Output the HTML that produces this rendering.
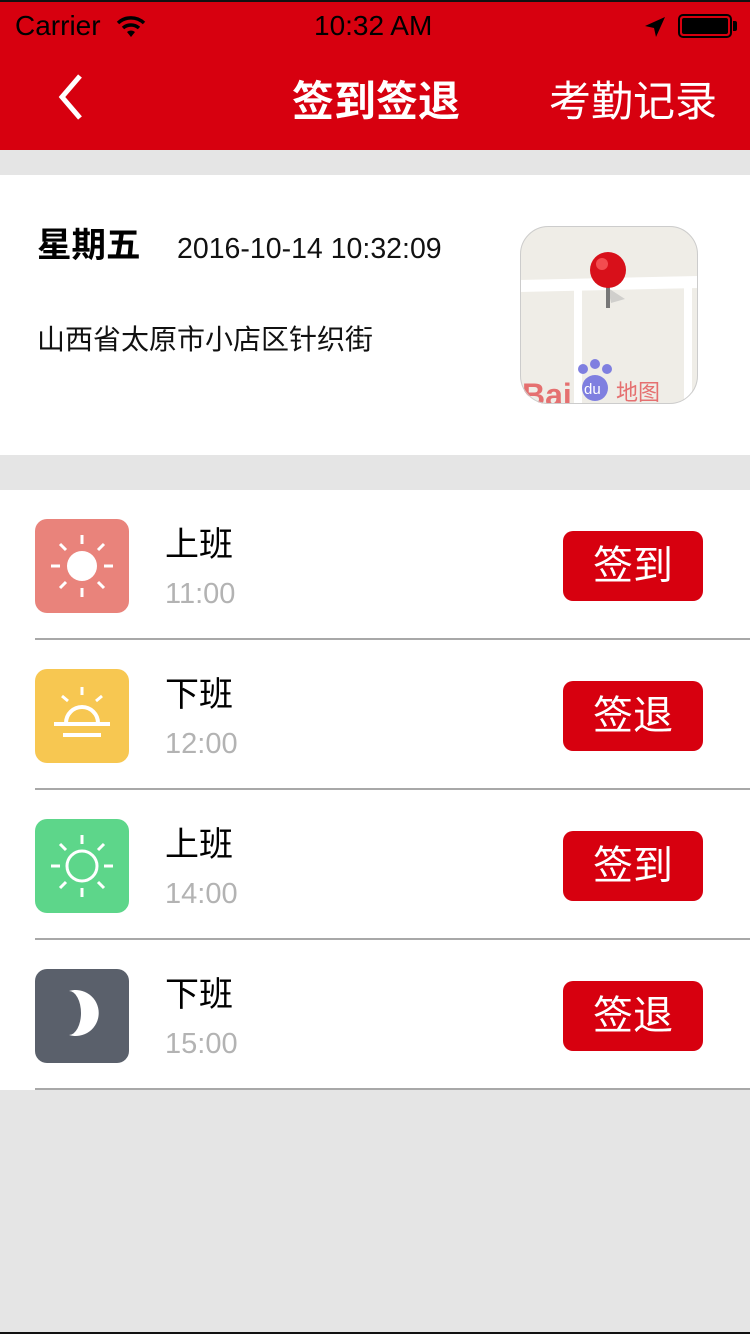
<!DOCTYPE html>
<html><head><meta charset="utf-8"><style>
*{margin:0;padding:0;box-sizing:border-box}
body{width:750px;height:1334px;background:#e5e5e5;position:relative;overflow:hidden;font-family:"Liberation Sans","Noto Sans CJK SC",sans-serif}
.a{position:absolute;white-space:nowrap}
.nav{position:absolute;left:0;top:0;width:750px;height:150px;background:#d7000f;border-top:2px solid #111}
.sep{position:absolute;left:35px;width:715px;height:2px;background:#a8a8a8}
.ic{position:absolute;left:35px;width:94px;height:94px;border-radius:12px}
.t1{position:absolute;left:165px;font-size:34px;color:#000;line-height:40px}
.t2{position:absolute;left:165px;font-size:29px;color:#b3b3b3;line-height:32px}
.btn{position:absolute;left:563px;width:140px;height:70px;border-radius:10px;background:#d7000f;color:#fff;font-size:40px;line-height:70px;text-align:center}
</style></head><body>
<div class="nav">
<div class="a" style="left:15px;top:8px;font-size:28px;color:#000">Carrier</div>
<svg class="a" style="left:116px;top:12px" width="30" height="24" viewBox="0 0 30 24"><path d="M2 9a19 19 0 0 1 26 0" stroke="#000" stroke-width="3.5" fill="none"/><path d="M7 14a12 12 0 0 1 16 0" stroke="#000" stroke-width="3.5" fill="none"/><path d="M15 23l-4-5a6 6 0 0 1 8 0z" fill="#000"/></svg>
<div class="a" style="left:314px;top:8px;font-size:28px;color:#000">10:32 AM</div>
<svg class="a" style="left:644px;top:14px" width="22" height="22" viewBox="0 0 22 22"><path d="M21 1L1 10l9 2 2 9z" fill="#000"/></svg>
<div class="a" style="left:678px;top:12px;width:54px;height:24px;border:2px solid #000;border-radius:5px;padding:2px"><div style="width:100%;height:100%;background:#000;border-radius:2px"></div></div>
<div class="a" style="left:733px;top:19px;width:4px;height:10px;background:#000;border-radius:0 2px 2px 0"></div>
<svg class="a" style="left:56px;top:72px" width="30" height="46" viewBox="0 0 30 46"><path d="M24 2L6 23l18 21" stroke="#fff" stroke-width="5" fill="none"/></svg>
<div class="a" style="left:292px;top:74px;font-size:42px;font-weight:bold;color:#fff;line-height:52px">签到签退</div>
<div class="a" style="left:549px;top:74px;font-size:42px;color:#fff;line-height:52px">考勤记录</div>
</div>
<div class="a" style="left:0;top:175px;width:750px;height:280px;background:#fff"></div>
<div class="a" style="left:37px;top:226px;font-size:34.5px;font-weight:bold;line-height:40px">星期五</div>
<div class="a" style="left:177px;top:232px;font-size:28.5px;line-height:34px;color:#111">2016-10-14 10:32:09</div>
<div class="a" style="left:37px;top:323px;font-size:28px;line-height:34px;color:#111">山西省太原市小店区针织街</div>
<svg class="a" style="left:520px;top:226px" width="178" height="178" viewBox="0 0 178 178">
<defs><clipPath id="c"><rect width="178" height="178" rx="28"/></clipPath></defs>
<g clip-path="url(#c)"><rect width="178" height="178" fill="#efede7"/>
<path d="M0 60 L178 56" stroke="#fff" stroke-width="12"/>
<path d="M58 62V178M168 58V178" stroke="#fff" stroke-width="8"/>
<path d="M88 62l3 15 14-4" fill="#bbb" opacity=".6"/>
<rect x="86" y="50" width="4" height="32" fill="#777"/>
<circle cx="88" cy="44" r="18" fill="#d8101a"/><circle cx="82" cy="38" r="6" fill="#f66" opacity=".7"/>
<text x="2" y="180" font-family="Liberation Sans" font-weight="bold" font-size="32" fill="#e57070">Bai</text>
<circle cx="75" cy="162" r="13" fill="#7f7fe0"/><circle cx="63" cy="143" r="5" fill="#7f7fe0"/><circle cx="75" cy="138" r="5" fill="#7f7fe0"/><circle cx="87" cy="143" r="5" fill="#7f7fe0"/>
<text x="64" y="168" font-family="Liberation Sans" font-size="15" fill="#fff">du</text>
<text x="96" y="174" font-family="Noto Sans CJK SC" font-size="22" fill="#e57070">地图</text></g>
<rect x=".5" y=".5" width="177" height="177" rx="28" fill="none" stroke="#ccc"/>
</svg>
<div class="a" style="left:0;top:490px;width:750px;height:600px;background:#fff"></div>

<div class="ic" style="top:519px;background:#e9837b"><svg width="94" height="94" viewBox="0 0 94 94"><circle cx="47" cy="47" r="15" fill="#fff"/><g stroke="#fff" stroke-width="3"><path d="M47 16v9M47 69v9M16 47h9M69 47h9M25 25l6 6M63 63l6 6M69 25l-6 6M25 69l6-6"/></g></svg></div>
<div class="t1" style="top:525px">上班</div><div class="t2" style="top:578px">11:00</div>
<div class="btn" style="top:531px">签到</div>
<div class="sep" style="top:638px"></div>

<div class="ic" style="top:669px;background:#f7c751"><svg width="94" height="94" viewBox="0 0 94 94"><g stroke="#fff" stroke-width="4" fill="none"><path d="M31 54a16 16 0 0 1 32 0"/><path d="M19 55h56M28 66h38"/><path d="M47 18v8M27 27l6 5M67 27l-6 5" stroke-width="3"/></g></svg></div>
<div class="t1" style="top:675px">下班</div><div class="t2" style="top:728px">12:00</div>
<div class="btn" style="top:681px">签退</div>
<div class="sep" style="top:788px"></div>

<div class="ic" style="top:819px;background:#5dd68a"><svg width="94" height="94" viewBox="0 0 94 94"><circle cx="47" cy="47" r="15" fill="none" stroke="#fff" stroke-width="3"/><g stroke="#fff" stroke-width="3"><path d="M47 16v9M47 69v9M16 47h9M69 47h9M25 25l6 6M63 63l6 6M69 25l-6 6M25 69l6-6"/></g></svg></div>
<div class="t1" style="top:825px">上班</div><div class="t2" style="top:878px">14:00</div>
<div class="btn" style="top:831px">签到</div>
<div class="sep" style="top:938px"></div>

<div class="ic" style="top:969px;background:#5a606b"><svg width="94" height="94" viewBox="0 0 94 94"><path d="M34 22A23 23 0 1 1 34 66A12 22 0 0 0 34 22z" fill="#fff"/></svg></div>
<div class="t1" style="top:975px">下班</div><div class="t2" style="top:1028px">15:00</div>
<div class="btn" style="top:981px">签退</div>
<div class="sep" style="top:1088px"></div>
<div class="a" style="left:0;top:1332px;width:750px;height:2px;background:#111"></div>
</body></html>
